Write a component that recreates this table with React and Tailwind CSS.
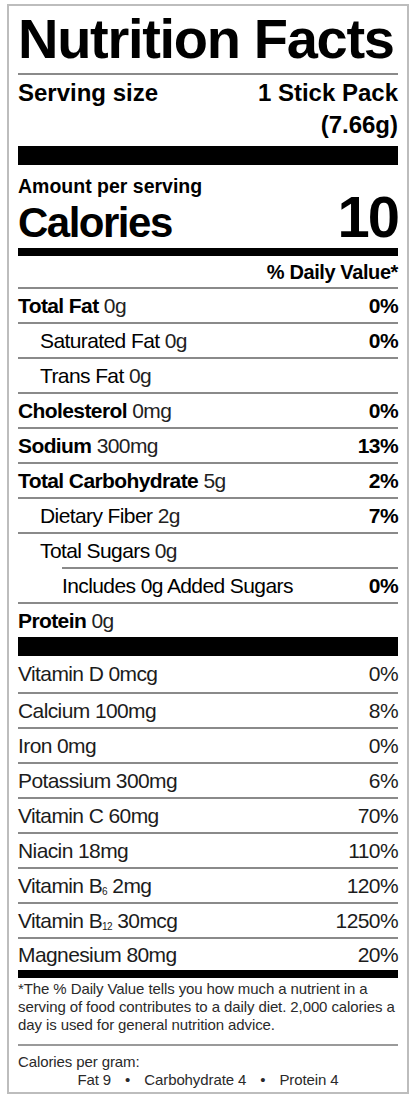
const nutrients = [
  { name: "Total Fat", amount: "0g", dv: "0%", bold: true },
  { name: "Saturated Fat", amount: "0g", dv: "0%", indent: 1 },
  { name: "Trans Fat", amount: "0g", indent: 1 },
  { name: "Cholesterol", amount: "0mg", dv: "0%", bold: true },
  { name: "Sodium", amount: "300mg", dv: "13%", bold: true },
  { name: "Total Carbohydrate", amount: "5g", dv: "2%", bold: true },
  { name: "Dietary Fiber", amount: "2g", dv: "7%", indent: 1 },
  { name: "Total Sugars", amount: "0g", indent: 1 },
  { name: "Includes 0g Added Sugars", dv: "0%", indent: 2 },
  { name: "Protein", amount: "0g", bold: true },
];

const vitamins = [
  { label: "Vitamin D 0mcg", dv: "0%" },
  { label: "Calcium 100mg", dv: "8%" },
  { label: "Iron 0mg", dv: "0%" },
  { label: "Potassium 300mg", dv: "6%" },
  { label: "Vitamin C 60mg", dv: "70%" },
  { label: "Niacin 18mg", dv: "110%" },
  { label: (<>Vitamin B<sub className="text-[10px] align-baseline relative top-[2px]">6</sub> 2mg</>), dv: "120%" },
  { label: (<>Vitamin B<sub className="text-[10px] align-baseline relative top-[2px]">12</sub> 30mcg</>), dv: "1250%" },
  { label: "Magnesium 80mg", dv: "20%" },
];

export default function App() {
  return (
    <div className="bg-white w-[416px] min-h-[1102px] pt-[4px] pl-[7px] font-['Liberation_Sans',Arial,sans-serif] text-black">
      <div className="w-[402px] border-2 border-[#bdbdbd] px-[9px] pb-[3px]">
        {/* header */}
        <h1 className="pt-[5px] text-[56px] leading-[56px] font-bold tracking-[-1.3px] whitespace-nowrap">
          Nutrition Facts
        </h1>
        <div className="mt-[6px] h-[2px] bg-[#8a8a8a]" />
        <div className="mt-[2px] flex justify-between text-[24px] leading-[32px] font-bold">
          <span>Serving size</span>
          <span className="text-right">
            1 Stick Pack
            <br />
            (7.66g)
          </span>
        </div>
        <div className="mt-[5px] h-[19px] bg-black" />

        {/* calories */}
        <p className="mt-[10px] text-[19.5px] leading-[22px] font-bold">Amount per serving</p>
        <div className="-mt-[2px] flex justify-between items-baseline font-bold">
          <span className="text-[42px] leading-[44px] tracking-[-1.5px]">Calories</span>
          <span className="text-[58px] leading-[44px] tracking-[-2px]">10</span>
        </div>
        <div className="mt-[3px] h-[8px] bg-black" />
        <div className="h-[31px] pt-[2px] text-right text-[20px] leading-[29px] font-bold tracking-[-0.4px]">
          % Daily Value*
        </div>

        {/* nutrients */}
        {nutrients.map((n) => (
          <NutrientRow key={n.name} {...n} />
        ))}
        <div className="h-[19px] bg-black" />

        {/* vitamins + minerals */}
        {vitamins.map((v, i) => (
          <div
            key={i}
            className={`flex justify-between items-center text-[21px] tracking-[-0.6px] text-[#1c1c1c] ${
              i === 0
                ? "h-[36px]"
                : i === vitamins.length - 1
                ? "h-[33px] border-t-2 border-[#8a8a8a]"
                : "h-[35px] border-t-2 border-[#8a8a8a]"
            }`}
          >
            <span>{v.label}</span>
            <span>{v.dv}</span>
          </div>
        ))}
        <div className="h-[8px] bg-black" />

        {/* footnote */}
        <p className="mt-[2px] text-[15px] leading-[18px] text-[#2a2a2a] tracking-[-0.1px] whitespace-nowrap">
          *The % Daily Value tells you how much a nutrient in a
          <br />
          serving of food contributes to a daily diet. 2,000 calories a
          <br />
          day is used for general nutrition advice.
        </p>
        <div className="mt-[10px] h-[2px] bg-[#9a9a9a]" />
        <div className="mt-[7px] text-[15px] leading-[18px] text-[#2a2a2a] tracking-[-0.1px]">
          <p>Calories per gram:</p>
          <p className="flex justify-center gap-[14px]">
            <span>Fat 9</span>
            <span>•</span>
            <span>Carbohydrate 4</span>
            <span>•</span>
            <span>Protein 4</span>
          </p>
        </div>
      </div>
    </div>
  );
}

/* one line of the macro list */
function NutrientRow({ name, amount, dv, bold, indent = 0 }) {
  const pad = indent === 2 ? "pl-[44px]" : indent === 1 ? "pl-[22px]" : "";
  return (
    <div className="h-[35px] flex flex-col">
      <div className={`h-[2px] bg-[#8a8a8a] ${indent === 2 ? "ml-[44px]" : ""}`} />
      <div className={`flex-1 flex justify-between items-center text-[21px] tracking-[-0.6px] ${pad}`}>
        <span>
          {bold ? <span className="font-bold">{name}</span> : name}
          {amount ? <span className="text-[#222]"> {amount}</span> : null}
        </span>
        {dv ? <span className="font-bold">{dv}</span> : null}
      </div>
    </div>
  );
}
